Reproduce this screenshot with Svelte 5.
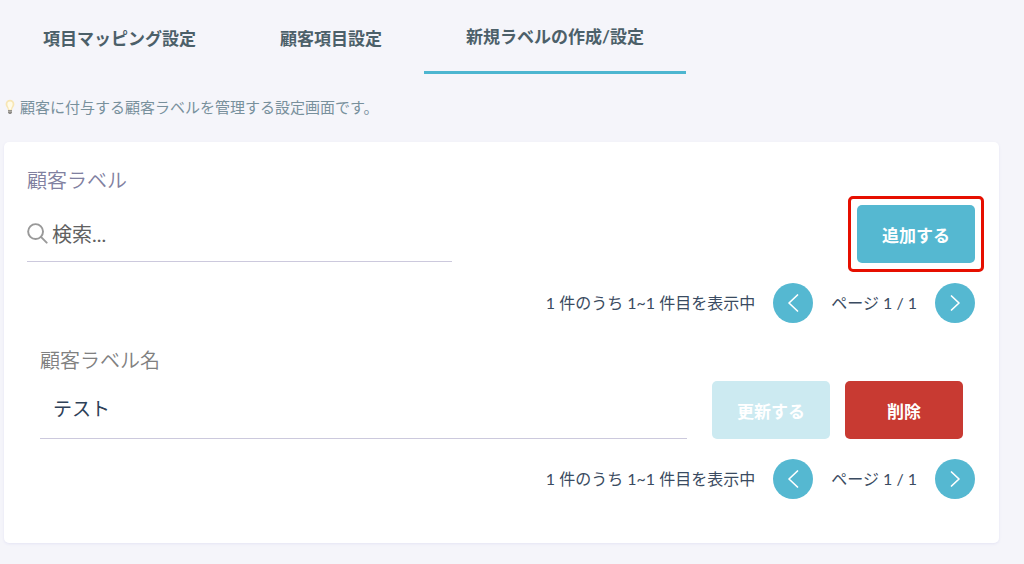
<script lang="ts">
  type Tab = { id: string; label: string };

  const tabs: Tab[] = [
    { id: 'mapping', label: '項目マッピング設定' },
    { id: 'fields', label: '顧客項目設定' },
    { id: 'labels', label: '新規ラベルの作成/設定' },
  ];

  let activeTab = $state('labels');
  let query = $state('');
  let saved = $state('テスト');
  let name = $state('テスト');
  let page = $state(1);
  const pageCount = 1;

  let changed = $derived(name !== saved);
</script>

{#snippet pager()}
  <div class="pager">
    <span class="range">1 件のうち 1~1 件目を表示中</span>
    <button class="round" type="button" aria-label="前のページ" onclick={() => (page = Math.max(1, page - 1))}>
      <svg width="20" height="20" viewBox="0 0 20 20" fill="none" stroke="currentColor" stroke-width="1.7" stroke-linecap="round" stroke-linejoin="round">
        <polyline points="14.5 2 6 10 14.5 18" />
      </svg>
    </button>
    <span class="page">ページ {page} / {pageCount}</span>
    <button class="round" type="button" aria-label="次のページ" onclick={() => (page = Math.min(pageCount, page + 1))}>
      <svg width="20" height="20" viewBox="0 0 20 20" fill="none" stroke="currentColor" stroke-width="1.7" stroke-linecap="round" stroke-linejoin="round">
        <polyline points="6.5 3 14 10 6.5 17" />
      </svg>
    </button>
  </div>
{/snippet}

<nav class="tabs">
  {#each tabs as tab (tab.id)}
    <button class="tab" class:active={activeTab === tab.id} type="button" onclick={() => (activeTab = tab.id)}>
      {tab.label}
    </button>
  {/each}
</nav>

<p class="hint">
  <svg width="12" height="16" viewBox="0 0 12 16" aria-hidden="true">
    <path d="M6 .8a4.4 4.4 0 0 0-4.4 4.4c0 2.2 1.9 3.2 2.4 5.8h4c.5-2.6 2.4-3.6 2.4-5.8A4.4 4.4 0 0 0 6 .8z" fill="#f7e6b4" />
    <path d="M6 2.4a2.7 2.7 0 0 0-2.6 2.8C3.4 7 4.6 7.6 5 10.4h2C7.4 7.6 8.6 7 8.600 5.2A2.7 2.7 0 0 0 6 2.4z" fill="#fffbe8" />
    <path d="M4 11h4v2.6L7 15H5l-1-1.4z" fill="#8e8c88" />
    <path d="M4 12.3h4" stroke="#c9c6bd" stroke-width=".7" />
  </svg>
  <span>顧客に付与する顧客ラベルを管理する設定画面です。</span>
</p>

<main class="card">
  <h1 class="title">顧客ラベル</h1>

  <div class="toolbar">
    <label class="search">
      <svg width="21" height="21" viewBox="0 0 22 22" fill="none" stroke="#999" stroke-width="2" stroke-linecap="round" aria-hidden="true">
        <circle cx="9" cy="9" r="7.8" />
        <path d="M14.6 14.6l6 6" />
      </svg>
      <input type="text" aria-label="検索" placeholder="検索..." bind:value={query} />
    </label>
    <div class="callout">
      <button class="btn" type="button">追加する</button>
    </div>
  </div>

  {@render pager()}

  <div class="row">
    <div class="field">
      <label for="label-name">顧客ラベル名</label>
      <input id="label-name" type="text" bind:value={name} />
    </div>
    <div class="actions">
      <button class="btn" type="button" disabled={!changed} onclick={() => (saved = name)}>更新する</button>
      <button class="btn danger" type="button">削除</button>
    </div>
  </div>

  {@render pager()}
</main>

<style>
  :global(body) {
    background: #f5f5fa;
    font-family: Lato, 'Noto Sans CJK JP', sans-serif;
    color: #2e4057;
  }
  button,
  input {
    font: inherit;
    color: inherit;
    margin: 0;
    padding: 0;
    border: 0;
    background: none;
    border-radius: 0;
  }
  button {
    cursor: pointer;
  }
  input {
    min-width: 0;
    outline: none;
  }
  .tabs {
    display: flex;
    padding-left: 1px;
  }
  .tab {
    height: 74px;
    padding: 0 42px;
    font-size: 17px;
    font-weight: 700;
    color: #4c6069;
    white-space: nowrap;
  }
  .tab.active {
    border-bottom: 3px solid #4db6d0;
  }
  .hint {
    display: flex;
    align-items: center;
    gap: 4px;
    margin: 21px 4px 23px;
    font-size: 15px;
    line-height: 24px;
    color: #78909c;
  }
  .card {
    margin: 0 25px 20px 4px;
    padding: 23px 24px 44px 23px;
    background: #fff;
    border-radius: 5px;
    box-shadow: 0 1px 3px #e4e4f4;
  }
  .title {
    margin: 0;
    font-size: 20px;
    font-weight: 350;
    line-height: 30px;
    color: #8080a0;
  }
  .toolbar {
    display: flex;
    justify-content: space-between;
    align-items: center;
    margin-top: 1px;
  }
  .search {
    display: flex;
    align-items: center;
    gap: 4px;
    flex: 0 0 44.8%;
    height: 54px;
    border-bottom: 1px solid #ccc9dd;
  }
  .search input {
    flex: 1;
    font-size: 20px;
  }
  .search input::placeholder {
    color: #606060;
    opacity: 1;
  }
  .callout {
    margin-right: -9px;
    padding: 6px;
    border: 3px solid #e60f00;
    border-radius: 5px;
  }
  .btn {
    display: block;
    width: 118px;
    height: 58px;
    border-radius: 5px;
    background: #55b8d1;
    color: #fff;
    font-size: 17px;
    font-weight: 700;
  }
  .btn:disabled {
    background: #cceaf1;
    cursor: default;
  }
  .btn.danger {
    background: #c83a32;
  }
  .pager {
    display: flex;
    justify-content: flex-end;
    align-items: center;
    gap: 18px;
    margin-top: 11px;
    font-size: 16px;
    line-height: 22px;
    color: #3a4b61;
  }
  .round {
    display: grid;
    place-items: center;
    width: 40px;
    height: 40px;
    border-radius: 50%;
    background: #55b8d1;
    color: #fff;
  }
  .row {
    display: flex;
    align-items: flex-end;
    gap: 25px;
    margin: 21px 12px 0 13px;
  }
  .row + .pager {
    margin-top: 20px;
  }
  .actions {
    display: flex;
    gap: 15px;
  }
  .field {
    display: flex;
    flex: 1;
    flex-direction: column;
  }
  .field label {
    font-size: 20px;
    font-weight: 350;
    line-height: 32px;
    color: #808080;
  }
  .field input {
    height: 62px;
    padding: 0 13px;
    border-bottom: 1px solid #ccc9dd;
    font-size: 19px;
  }
</style>
